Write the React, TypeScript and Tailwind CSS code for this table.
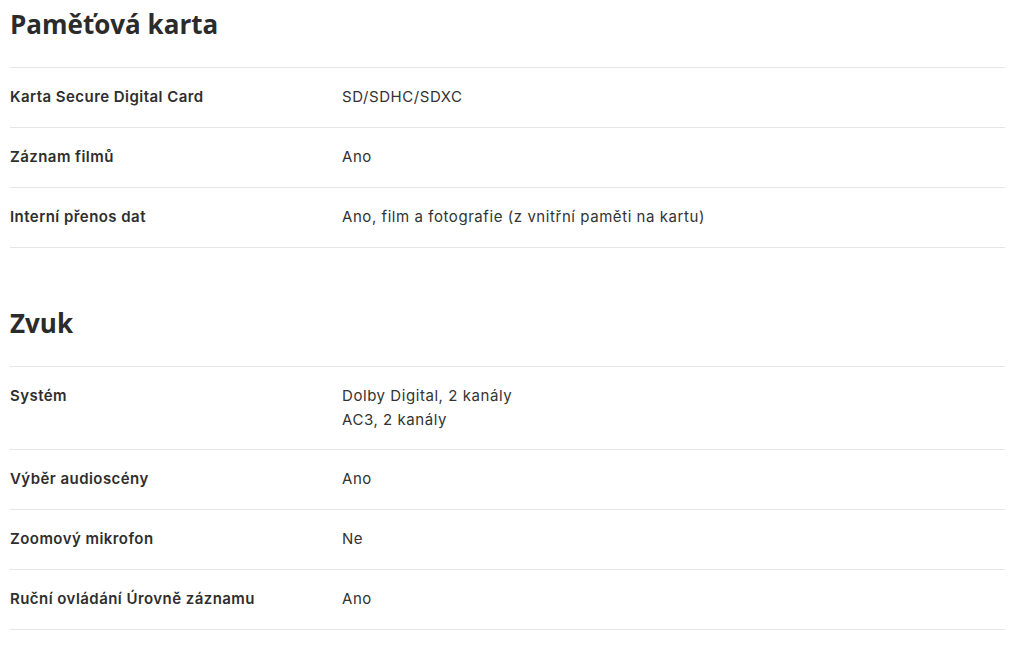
import React from "react";

type Row = { label: string; values: string[] };

const sections: { title: string; rows: Row[] }[] = [
  {
    title: "Paměťová karta",
    rows: [
      { label: "Karta Secure Digital Card", values: ["SD/SDHC/SDXC"] },
      { label: "Záznam filmů", values: ["Ano"] },
      { label: "Interní přenos dat", values: ["Ano, film a fotografie (z vnitřní paměti na kartu)"] },
    ],
  },
  {
    title: "Zvuk",
    rows: [
      { label: "Systém", values: ["Dolby Digital, 2 kanály", "AC3, 2 kanály"] },
      { label: "Výběr audioscény", values: ["Ano"] },
      { label: "Zoomový mikrofon", values: ["Ne"] },
      { label: "Ruční ovládání Úrovně záznamu", values: ["Ano"] },
    ],
  },
];

export default function App() {
  return (
    <div className="min-h-screen bg-white text-[#333333] pl-[10px] pr-[20px]" style={{ fontFamily: 'Inter, "Liberation Sans", sans-serif' }}>
      {sections.map((s, i) => (
        <section key={s.title} className={i === 0 ? "" : "mt-[51px]"}>
          <h2
            className="text-[26px] leading-[32px] font-bold pt-[8px] pb-[27px] border-b border-[#e6e6e6] text-[#2b2b2b]"
            style={{ fontFamily: '"Open Sans", "Liberation Sans", sans-serif' }}
          >
            {s.title}
          </h2>
          {s.rows.map((r) => (
            <div
              key={r.label}
              className={
                "flex border-b border-[#e6e6e6] pt-[17px] text-[15px] leading-[24px] " +
                (r.values.length > 1 ? "pb-[17px]" : "pb-[18px]")
              }
            >
              <div className="w-[332px] shrink-0 font-semibold tracking-[0.45px] text-[#2e2e2e]">{r.label}</div>
              <div className="text-[#333333] tracking-[0.56px]">
                {r.values.map((v) => (
                  <div key={v}>{v}</div>
                ))}
              </div>
            </div>
          ))}
        </section>
      ))}
    </div>
  );
}
